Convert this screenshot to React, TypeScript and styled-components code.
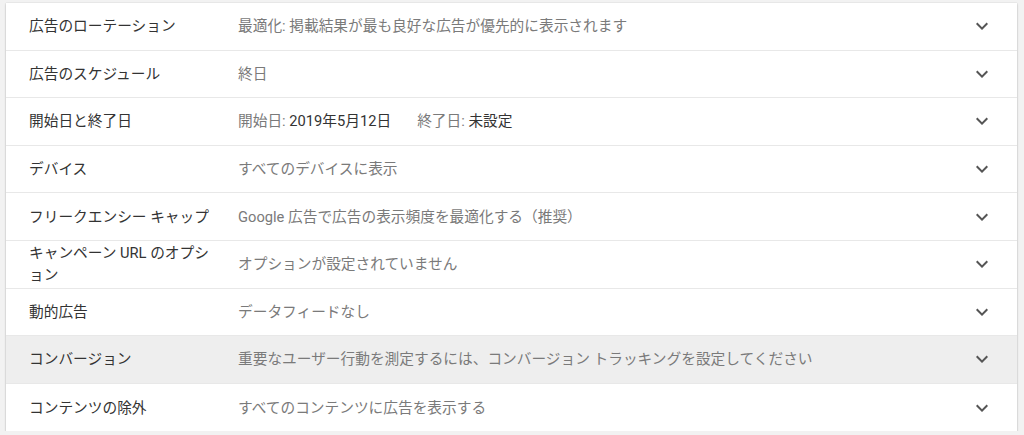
import React from "react";
import styled, { createGlobalStyle } from "styled-components";

const Global = createGlobalStyle`
  html, body { margin: 0; padding: 0; background: #f2f2f2; }
  body { font-family: Roboto, "Noto Sans CJK JP", sans-serif; -webkit-font-smoothing: antialiased; }
`;

const Page = styled.div`
  padding: 3px 7px 0 6px;
`;

const Card = styled.div`
  background: #fff;
  box-shadow: 0 1px 2px rgba(0, 0, 0, 0.22), 0 0 1px rgba(0, 0, 0, 0.18);
  display: flex;
  flex-direction: column;
`;

const Row = styled.div<{ $hl?: boolean }>`
  box-sizing: border-box;
  height: 47.6px;
  display: grid;
  grid-template-columns: 209px 1fr 24px;
  align-items: center;
  padding: 0 23px 0 23px;
  background: ${(p) => (p.$hl ? "#eeeeee" : "#fff")};
  border-bottom: 1px solid #e8e8e8;
  &:last-child { border-bottom: none; }
`;

const Label = styled.div`
  font-size: 14.7px;
  line-height: 22px;
  color: #333;
  padding-right: 23px;
  line-break: loose;
`;

const Value = styled.div`
  font-size: 14.7px;
  line-height: 20px;
  color: #7a7a7a;
  white-space: nowrap;
`;

const Strong = styled.span`
  color: #333;
`;

const Gap = styled.span`
  display: inline-block;
  width: 26px;
`;

const Chevron = styled.svg`
  width: 24px;
  height: 24px;
  fill: #555;
`;

const Expand = () => (
  <Chevron viewBox="0 0 24 24">
    <path d="M16.59 8.59L12 13.17 7.41 8.59 6 10l6 6 6-6z" />
  </Chevron>
);

type Item = { label: string; value: React.ReactNode; hl?: boolean };

const items: Item[] = [
  { label: "広告のローテーション", value: "最適化: 掲載結果が最も良好な広告が優先的に表示されます" },
  { label: "広告のスケジュール", value: "終日" },
  {
    label: "開始日と終了日",
    value: (
      <>
        開始日: <Strong>2019年5月12日</Strong>
        <Gap />
        終了日: <Strong>未設定</Strong>
      </>
    ),
  },
  { label: "デバイス", value: "すべてのデバイスに表示" },
  { label: "フリークエンシー キャップ", value: "Google 広告で広告の表示頻度を最適化する（推奨）" },
  { label: "キャンペーン URL のオプション", value: "オプションが設定されていません" },
  { label: "動的広告", value: "データフィードなし" },
  { label: "コンバージョン", value: "重要なユーザー行動を測定するには、コンバージョン トラッキングを設定してください", hl: true },
  { label: "コンテンツの除外", value: "すべてのコンテンツに広告を表示する" },
];

export default function App() {
  return (
    <>
      <Global />
      <Page>
        <Card>
          {items.map((it) => (
            <Row key={it.label} $hl={it.hl}>
              <Label lang="ja">{it.label}</Label>
              <Value>{it.value}</Value>
              <Expand />
            </Row>
          ))}
        </Card>
      </Page>
    </>
  );
}
